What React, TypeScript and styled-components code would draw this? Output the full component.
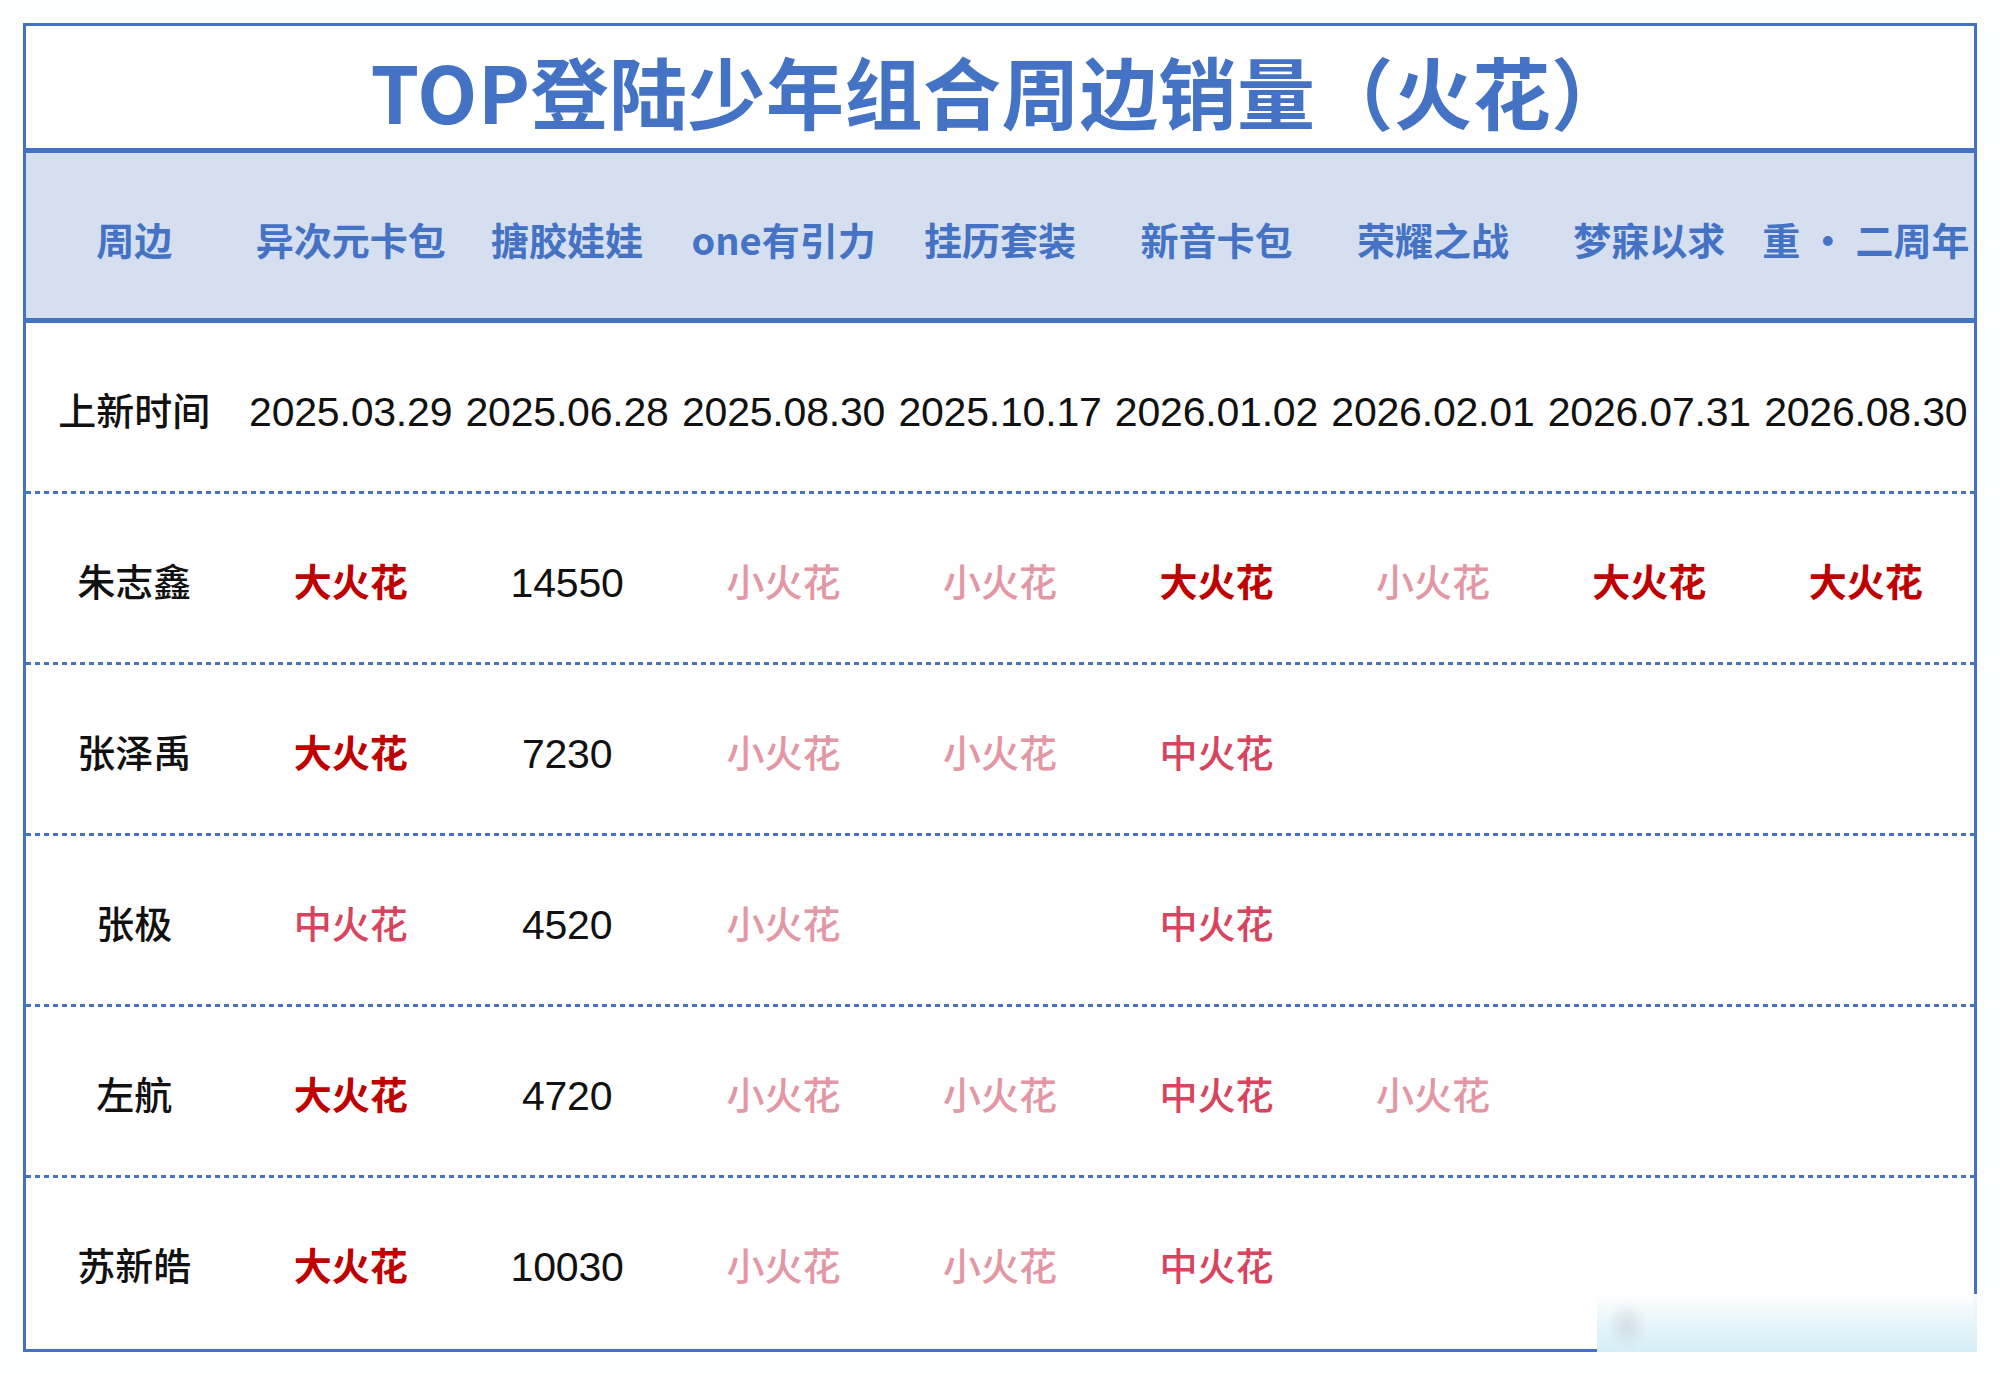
import styled, { createGlobalStyle } from "styled-components";

const GlobalStyle = createGlobalStyle`
  html, body {
    margin: 0;
    padding: 0;
    background: #ffffff;
  }
  * {
    box-sizing: border-box;
  }
`;

const blue = "#4472c4";

const Page = styled.div`
  width: 2000px;
  height: 1374px;
  padding: 23px 23px 0 23px;
  background: #fdfefe;
`;

const Frame = styled.div`
  position: relative;
  width: 1954px;
  border: 3px solid ${blue};
  background: #ffffff;
`;

const TitleBar = styled.header`
  height: 127px;
  display: flex;
  align-items: center;
  justify-content: center;
  padding-top: 6px;
  border-bottom: 5px solid ${blue};
`;

const Title = styled.h1`
  margin: 0;
  font-family: "Noto Sans CJK SC", "Liberation Sans", sans-serif;
  font-weight: 700;
  font-size: 78px;
  letter-spacing: 0.5px;
  color: ${blue};
`;

const Row = styled.div<{ $band?: boolean; $last?: boolean; $h: number }>`
  display: grid;
  grid-template-columns: repeat(9, 1fr);
  align-items: center;
  height: ${(p) => p.$h}px;
  background: ${(p) => (p.$band ? "#d5dff0" : "transparent")};
  ${(p) =>
    p.$band
      ? `border-bottom: 5px solid ${blue};`
      : p.$last
      ? ""
      : `background-image: repeating-linear-gradient(90deg, ${blue} 0 5px, transparent 5px 9px);
         background-size: 100% 3px;
         background-position: left bottom;
         background-repeat: no-repeat;`}
`;

const HeadCell = styled.div`
  text-align: center;
  font-family: "Noto Sans CJK SC", sans-serif;
  font-weight: 700;
  font-size: 38px;
  color: ${blue};
  white-space: nowrap;
  padding-top: 6px;
`;

const NameCell = styled.div`
  text-align: center;
  font-family: "Noto Sans CJK SC", sans-serif;
  font-weight: 500;
  font-size: 38px;
  color: #111111;
  white-space: nowrap;
`;

const NumCell = styled.div`
  text-align: center;
  font-family: "Liberation Sans", Arial, sans-serif;
  font-size: 41px;
  color: #111111;
  white-space: nowrap;
  letter-spacing: -0.2px;
  padding-top: 7px;
`;

const sparkColors: Record<string, string> = {
  大火花: "#c00000",
  中火花: "#d8445e",
  小火花: "#e396a4",
};

const Spark = styled.div<{ $kind: string }>`
  text-align: center;
  font-family: "Noto Sans CJK SC", sans-serif;
  font-weight: ${(p) => (p.$kind === "大火花" ? 700 : 500)};
  font-size: 38px;
  color: ${(p) => sparkColors[p.$kind] || "#111"};
  white-space: nowrap;
`;

const Smudge = styled.div`
  position: absolute;
  right: -3px;
  bottom: -3px;
  width: 380px;
  height: 58px;
  background: linear-gradient(180deg, rgba(255, 255, 255, 0.95) 0%, #e4f4f9 55%, #d6eff7 100%);
  &::before {
    content: "";
    position: absolute;
    left: 10px;
    top: 6px;
    width: 40px;
    height: 52px;
    background: radial-gradient(ellipse at center, rgba(200, 210, 215, 0.6), rgba(255, 255, 255, 0) 70%);
  }
`;

const headers = [
  "周边",
  "异次元卡包",
  "搪胶娃娃",
  "one有引力",
  "挂历套装",
  "新音卡包",
  "荣耀之战",
  "梦寐以求",
  "重 · 二周年",
];

const dates = [
  "2025.03.29",
  "2025.06.28",
  "2025.08.30",
  "2025.10.17",
  "2026.01.02",
  "2026.02.01",
  "2026.07.31",
  "2026.08.30",
];

interface IMember {
  name: string;
  cells: string[];
}

const members: IMember[] = [
  {
    name: "朱志鑫",
    cells: ["大火花", "14550", "小火花", "小火花", "大火花", "小火花", "大火花", "大火花"],
  },
  { name: "张泽禹", cells: ["大火花", "7230", "小火花", "小火花", "中火花", "", "", ""] },
  { name: "张极", cells: ["中火花", "4520", "小火花", "", "中火花", "", "", ""] },
  { name: "左航", cells: ["大火花", "4720", "小火花", "小火花", "中火花", "小火花", "", ""] },
  { name: "苏新皓", cells: ["大火花", "10030", "小火花", "小火花", "中火花", "", "", ""] },
];

function App() {
  return (
    <Page>
      <GlobalStyle />
      <Frame>
        <TitleBar>
          <Title>TOP登陆少年组合周边销量（火花）</Title>
        </TitleBar>
        <Row $band $h={170}>
          {headers.map((h) => (
            <HeadCell key={h}>{h}</HeadCell>
          ))}
        </Row>
        <Row $h={171}>
          <NameCell>上新时间</NameCell>
          {dates.map((d) => (
            <NumCell key={d}>{d}</NumCell>
          ))}
        </Row>
        {members.map((m, i) => (
          <Row key={m.name} $h={171} $last={i === members.length - 1}>
            <NameCell>{m.name}</NameCell>
            {m.cells.map((c, j) =>
              sparkColors[c] ? (
                <Spark key={j} $kind={c}>
                  {c}
                </Spark>
              ) : (
                <NumCell key={j}>{c}</NumCell>
              )
            )}
          </Row>
        ))}
        <Smudge />
      </Frame>
    </Page>
  );
}

export default App;
